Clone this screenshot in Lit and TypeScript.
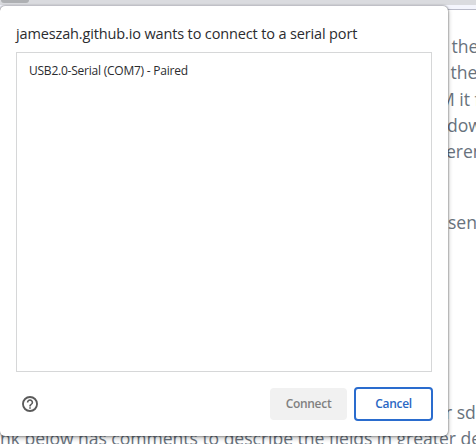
import { LitElement, html, css } from "lit";
import { customElement, property } from "lit/decorators.js";

interface Line { text: string; x: number; gap: number; }

const LINES: Line[] = [
  { text: "the", x: 451.5, gap: 0 },
  { text: "the", x: 450.5, gap: 0 },
  { text: "M it f", x: 439, gap: 0 },
  { text: "dow", x: 447, gap: 0 },
  { text: "eren", x: 446, gap: 0 },
  { text: "sen", x: 448, gap: 45 },
  { text: "r sd", x: 445, gap: 163 },
  { text: "nk below has comments to describe the fields in greater de", x: 0, gap: 0 },
];

@customElement("page-behind")
class PageBehind extends LitElement {
  static styles = css`
    :host { display: block; height: 444px; overflow: hidden; background: #fff; }
    .tabs { height: 5px; background: #dadbdf; overflow: hidden; }
    .tab { width: 28px; height: 3px; margin-left: 1px; background: #aeb0b3; border-radius: 0 0 12px 12px; }
    .bar { height: 4px; background: #f4f5fd; border-bottom: 1px solid #b9bbc9; }
    .text { padding-top: 23px; }
    .line {
      height: 26.3px; line-height: 26.3px; white-space: pre;
      font-family: "Open Sans", "Noto Sans", sans-serif; font-size: 17.6px;
      letter-spacing: -0.05px; color: #68727d;
    }
  `;
  render() {
    return html`
      <div class="tabs"><div class="tab"></div></div>
      <div class="bar"></div>
      <div class="text">
        ${LINES.map((l) => html`<div class="line" style="padding-left:${l.x}px;margin-top:${l.gap}px">${l.text}</div>`)}
      </div>
    `;
  }
}

@customElement("port-dialog")
class PortDialog extends LitElement {
  @property() origin = "jameszah.github.io";
  @property({ attribute: false }) ports = ["USB2.0-Serial (COM7) - Paired"];

  static styles = css`
    :host {
      box-sizing: border-box; display: flex; flex-direction: column;
      width: 448px; height: 430px; padding: 17px 16px 14px; background: #fff;
      border-radius: 5px; box-shadow: 0 0 2px rgba(0,0,0,.65), 0 2px 5px rgba(0,0,0,.3);
      font-family: "Open Sans", "Noto Sans", sans-serif; color: #2b2c2f;
    }
    .title { height: 22px; line-height: 22px; font-size: 14.5px; letter-spacing: -0.14px; white-space: nowrap; }
    .list { box-sizing: border-box; height: 320px; margin-top: 7px; border: 1px solid #d6d7d8; padding: 8px 12px; }
    .port { height: 20px; line-height: 20px; font-size: 12px; letter-spacing: -0.23px; white-space: nowrap; }
    .foot { display: flex; align-items: center; margin-top: 15px; height: 34px; }
    .help { width: 16px; height: 16px; margin-left: 6px; display: block; }
    .btn {
      box-sizing: border-box; height: 32px; width: 77px; border-radius: 4px;
      line-height: 32px; text-align: center; font-size: 12px; font-weight: 600;
      letter-spacing: -0.3px;
    }
    .connect { margin-left: auto; background: #f1f1f1; color: #808080; }
    .cancel { width: 79px; height: 34px; margin-left: 7px; margin-right: -1px; line-height: 30px; border: 2px solid #2a6cce; color: #2a67c4; }
  `;
  render() {
    return html`
      <div class="title">${this.origin} wants to connect to a serial port</div>
      <div class="list">${this.ports.map((p) => html`<div class="port">${p}</div>`)}</div>
      <div class="foot">
        <svg class="help" viewBox="2 2 20 20" fill="#5a5a5a">
          <circle cx="12" cy="12" r="8.8" fill="none" stroke="#5a5a5a" stroke-width="2.3"/>
          <path d="M11 18h2v-2h-2v2zM12 6c-2.210 0-4 1.790-4 4h2c0-1.100.9-2 2-2s2 .9 2 2c0 2-3 1.750-3 5h2c0-2.250 3-2.500 3-5 0-2.210-1.790-4-4-4z"/>
        </svg>
        <div class="btn connect">Connect</div>
        <div class="btn cancel">Cancel</div>
      </div>
    `;
  }
}

@customElement("app-root")
class AppRoot extends LitElement {
  static styles = css`
    :host { display: block; position: relative; width: 476px; height: 444px; overflow: hidden; }
    .dialog { position: absolute; left: 0; top: 6px; }
  `;
  render() {
    return html`<page-behind></page-behind><port-dialog class="dialog"></port-dialog>`;
  }
}
